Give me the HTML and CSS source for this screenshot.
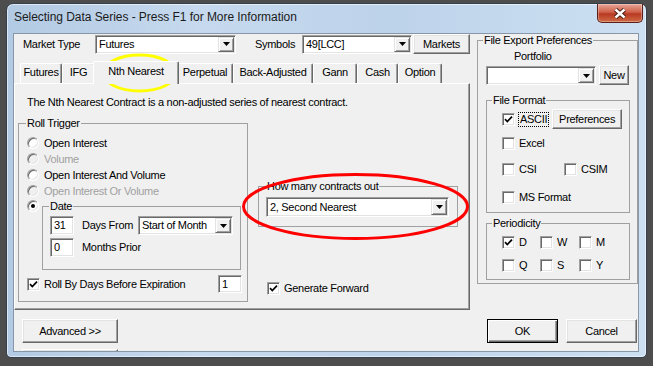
FILE: index.html
```html
<!DOCTYPE html>
<html lang="en">
<head>
  <meta charset="UTF-8">
  <title>Selecting Data Series</title>
  <link rel="stylesheet" href="styles.css">
</head>
<body>
  <div class="window">
    <div class="titlebar">
      <span class="title">Selecting Data Series - Press F1 for More Information</span>
      <span class="close">
        <svg width="14" height="11" viewBox="0 0 14 11"><path d="M2.5 1.5L11.5 9.5M11.5 1.5L2.5 9.5" stroke="#4a1a12" stroke-width="4.4"/><path d="M2.5 1.5L11.5 9.5M11.5 1.5L2.5 9.5" stroke="#fff" stroke-width="2.4"/></svg>
      </span>
    </div>

    <div class="client">
      <div class="left">
        <div class="toprow">
          <span class="lbl lbl-market">Market Type</span>
          <div class="combo combo-market">
            <span class="combo-text">Futures</span>
            <span class="combo-btn"><svg width="7" height="4" viewBox="0 0 7 4"><path d="M0 0h7L3.5 4z"/></svg></span>
          </div>
          <span class="lbl lbl-sym">Symbols</span>
          <div class="combo combo-sym">
            <span class="combo-text">49[LCC]</span>
            <span class="combo-btn"><svg width="7" height="4" viewBox="0 0 7 4"><path d="M0 0h7L3.5 4z"/></svg></span>
          </div>
          <button class="btn btn-markets">Markets</button>
        </div>

        <div class="tabs">
          <span class="tab tab-futures">Futures</span>
          <span class="tab tab-ifg">IFG</span>
          <span class="tab tab-nth active">Nth Nearest</span>
          <span class="tab tab-perp">Perpetual</span>
          <span class="tab tab-back">Back-Adjusted</span>
          <span class="tab tab-gann">Gann</span>
          <span class="tab tab-cash">Cash</span>
          <span class="tab tab-option">Option</span>
        </div>

        <div class="panel">
          <p class="desc">The Nth Nearest Contract is a non-adjusted series of nearest contract.</p>
          <div class="panel-body">
            <fieldset class="group roll">
              <legend>Roll Trigger</legend>
              <div class="group-body">
                <div class="opt"><span class="radio"></span>Open Interest</div>
                <div class="opt disabled"><span class="radio"></span>Volume</div>
                <div class="opt"><span class="radio"></span>Open Interest And Volume</div>
                <div class="opt disabled"><span class="radio"></span>Open Interest Or Volume</div>
                <div class="date-row">
                  <span class="radio checked"></span>
                  <fieldset class="group date">
                    <legend>Date</legend>
                    <div class="group-body">
                      <div class="date-line">
                        <span class="field field-num">31</span>
                        <span class="date-lbl">Days From</span>
                        <div class="combo combo-start">
                          <span class="combo-text">Start of Month</span>
                          <span class="combo-btn"><svg width="7" height="4" viewBox="0 0 7 4"><path d="M0 0h7L3.5 4z"/></svg></span>
                        </div>
                      </div>
                      <div class="date-line">
                        <span class="field field-num">0</span>
                        <span class="date-lbl">Months Prior</span>
                      </div>
                    </div>
                  </fieldset>
                </div>
                <div class="check-row expiry">
                  <span class="cb"><svg width="9" height="9" viewBox="0 0 9 9"><path d="M1 4.2l2.3 2.3L8 1.6" fill="none" stroke="#000" stroke-width="1.7"/></svg></span>
                  <span>Roll By Days Before Expiration</span>
                  <span class="field field-days">1</span>
                </div>
              </div>
            </fieldset>

            <div class="mid">
              <fieldset class="group howmany">
                <legend>How many contracts out</legend>
                <div class="group-body">
                  <div class="combo combo-nth">
                    <span class="combo-text">2, Second Nearest</span>
                    <span class="combo-btn"><svg width="7" height="4" viewBox="0 0 7 4"><path d="M0 0h7L3.5 4z"/></svg></span>
                  </div>
                </div>
              </fieldset>
              <div class="check-row forward">
                <span class="cb"><svg width="9" height="9" viewBox="0 0 9 9"><path d="M1 4.2l2.3 2.3L8 1.6" fill="none" stroke="#000" stroke-width="1.7"/></svg></span>
                <span>Generate Forward</span>
              </div>
            </div>
          </div>
        </div>
      </div>

      <div class="right">
        <fieldset class="group export">
          <legend>File Export Preferences</legend>
          <div class="group-body">
            <div class="portfolio-lbl">Portfolio</div>
            <div class="portfolio-row">
              <div class="combo combo-portfolio">
                <span class="combo-text"></span>
                <span class="combo-btn"><svg width="7" height="4" viewBox="0 0 7 4"><path d="M0 0h7L3.5 4z"/></svg></span>
              </div>
              <button class="btn btn-new">New</button>
            </div>

            <fieldset class="group format">
              <legend>File Format</legend>
              <div class="group-body">
                <div class="check-row ascii-row">
                  <span class="cb"><svg width="9" height="9" viewBox="0 0 9 9"><path d="M1 4.2l2.3 2.3L8 1.6" fill="none" stroke="#000" stroke-width="1.7"/></svg></span>
                  <span class="focus">ASCII</span>
                  <button class="btn btn-prefs">Preferences</button>
                </div>
                <div class="check-row excel-row"><span class="cb"></span>Excel</div>
                <div class="check-row csi-row">
                  <span class="item item-csi"><span class="cb"></span>CSI</span>
                  <span class="item"><span class="cb"></span>CSIM</span>
                </div>
                <div class="check-row ms-row"><span class="cb"></span>MS Format</div>
              </div>
            </fieldset>

            <fieldset class="group period">
              <legend>Periodicity</legend>
              <div class="group-body period-grid">
                <span class="item"><span class="cb"><svg width="9" height="9" viewBox="0 0 9 9"><path d="M1 4.2l2.3 2.3L8 1.6" fill="none" stroke="#000" stroke-width="1.7"/></svg></span>D</span>
                <span class="item"><span class="cb"></span>W</span>
                <span class="item"><span class="cb"></span>M</span>
                <span class="item"><span class="cb"></span>Q</span>
                <span class="item"><span class="cb"></span>S</span>
                <span class="item"><span class="cb"></span>Y</span>
              </div>
            </fieldset>
          </div>
        </fieldset>
      </div>

      <div class="footer">
        <div class="footer-stack">
          <button class="btn btn-advanced">Advanced &gt;&gt;</button>
          <button class="btn btn-advanced" aria-hidden="true"></button>
        </div>
        <button class="btn btn-dialog btn-ok">OK</button>
        <button class="btn btn-dialog">Cancel</button>
      </div>
    </div>
  </div>

  <svg class="marks" width="653" height="366" viewBox="0 0 653 366">
    <ellipse cx="139.5" cy="73" rx="36.5" ry="18" fill="none" stroke="#ffff00" stroke-width="2.8"/>
    <ellipse cx="355.5" cy="206.5" rx="112" ry="32" fill="none" stroke="#ff0000" stroke-width="3"/>
  </svg>
</body>
</html>
```

FILE: styles.css
```css
* {
  box-sizing: border-box;
}

body {
  margin: 0;
  width: 653px;
  height: 366px;
  overflow: hidden;
  position: relative;
  background: #4d4d4d;
  font-family: "Liberation Sans", Arial, sans-serif;
  font-size: 11px;
  line-height: 13px;
  letter-spacing: -0.3px;
  color: #000;
}

/* window frame */
.window {
  margin: 3px 0 0 6px;
  width: 641px;
  height: 355px;
  padding: 0 7px 0 6px;
  border: 1px solid #34404c;
  border-radius: 7px 7px 5px 5px;
  background: linear-gradient(to right, #b2cae3, #c6d9ee 30%, #bdd3ea 60%, #cde0f2);
  box-shadow: inset 0 0 0 1px rgba(255, 255, 255, 0.55);
}

.titlebar {
  display: flex;
  height: 29px;
}

.title {
  padding-left: 1px;
  line-height: 27px;
  font-size: 12px;
  letter-spacing: -0.05px;
  color: #1b1b1b;
}

.close {
  margin-left: auto;
  margin-right: -4px;
  width: 46px;
  height: 19px;
  display: flex;
  align-items: center;
  justify-content: center;
  border: 1px solid #5b2018;
  border-top: none;
  border-radius: 0 0 5px 5px;
  background: linear-gradient(#e6a898, #d06049 45%, #b83a22 55%, #cf6a45);
  box-shadow: inset 0 0 0 1px rgba(255, 255, 255, 0.3);
}

.client {
  width: 626px;
  height: 319px;
  border: 1px solid #8796a8;
  background: #f0f0f0;
  display: grid;
  grid-template-columns: 456px 168px;
  grid-template-rows: 276px auto;
  overflow: hidden;
}

/* common controls */
.btn {
  font: inherit;
  letter-spacing: inherit;
  color: #000;
  padding: 0;
  height: 20px;
  background: #f0f0f0;
  border: 1px solid;
  border-color: #fff #696969 #696969 #fff;
  box-shadow: inset -1px -1px #a0a0a0, inset 1px 1px #e3e3e3;
}

.field,
.combo {
  height: 19px;
  background: #fff;
  border: 1px solid;
  border-color: #a0a0a0 #fff #fff #a0a0a0;
  box-shadow: inset 1px 1px #696969, inset -1px -1px #e3e3e3;
}

.field {
  display: flex;
  align-items: center;
  padding-left: 3px;
}

.combo {
  display: flex;
  padding: 1px;
}

.combo-text {
  flex: 1;
  padding-left: 2px;
  align-self: center;
  white-space: nowrap;
}

.combo-btn {
  width: 16px;
  display: flex;
  align-items: center;
  justify-content: center;
  background: #f0f0f0;
  border: 1px solid;
  border-color: #e3e3e3 #696969 #696969 #e3e3e3;
  box-shadow: inset 1px 1px #fff, inset -1px -1px #a0a0a0;
}

.cb {
  flex: none;
  width: 13px;
  height: 13px;
  display: inline-flex;
  align-items: center;
  justify-content: center;
  background: #fff;
  border: 1px solid;
  border-color: #a0a0a0 #fff #fff #a0a0a0;
  box-shadow: inset 1px 1px #696969, inset -1px -1px #e3e3e3;
}

.radio {
  flex: none;
  position: relative;
  width: 12px;
  height: 12px;
  border-radius: 50%;
  background: #fff;
  border: 1px solid;
  border-color: #a0a0a0 #fff #fff #a0a0a0;
  box-shadow: inset 1px 1px #696969, inset -1px -1px #e3e3e3;
}

.radio.checked::after {
  content: "";
  position: absolute;
  left: 3px;
  top: 3px;
  width: 4px;
  height: 4px;
  border-radius: 50%;
  background: #000;
}

/* group boxes: the legend sits on the top line, the body carries the indent */
.group {
  margin: 0;
  padding: 0;
  min-width: 0;
  border: 1px solid #a0a0a0;
}

.group legend {
  padding: 0 1px;
  margin-left: 5px;
  line-height: 12px;
}

.check-row {
  display: flex;
  align-items: center;
  gap: 4px;
}

/* top row */
.toprow {
  display: flex;
  align-items: center;
  height: 20px;
  padding-left: 9px;
}

.lbl-market {
  width: 72px;
}

.combo-market {
  width: 141px;
}

.lbl-sym {
  margin-left: 19px;
  width: 47px;
}

.combo-sym {
  width: 110px;
}

.btn-markets {
  margin-left: 1px;
  width: 57px;
}

/* tabs */
.tabs {
  display: flex;
  align-items: flex-end;
  height: 22px;
  margin-top: 7px;
  padding-left: 6px;
}

.tab {
  height: 20px;
  text-align: center;
  line-height: 17px;
  border: 1px solid;
  border-bottom: none;
  border-color: #fff #696969 transparent #fff;
  border-radius: 2px 2px 0 0;
  box-shadow: inset -1px 0 #a0a0a0;
}

.tab.active {
  position: relative;
  z-index: 2;
  height: 23px;
  margin: 0 -2px -1px;
  background: #f0f0f0;
  line-height: 19px;
}

.tab-futures { width: 42px; }
.tab-ifg { width: 33px; }
.tab-nth { width: 86px; }
.tab-perp { width: 56px; }
.tab-back { width: 80px; }
.tab-gann { width: 44px; }
.tab-cash { width: 41px; }
.tab-option { width: 44px; }

.panel {
  height: 227px;
  border: 1px solid;
  border-color: #fff #696969 #696969 #fff;
  box-shadow: inset -1px -1px #a0a0a0;
}

.desc {
  margin: 12px 0 0 12px;
}

.panel-body {
  display: flex;
  gap: 10px;
  margin: 8px 0 0 3px;
}

/* roll trigger */
.roll {
  width: 230px;
  height: 185px;
}

.roll legend {
  margin-left: 7px;
}

.roll > .group-body {
  padding: 6px 5px 0 8px;
}

.opt {
  display: flex;
  align-items: center;
  gap: 5px;
  height: 16px;
}

.opt.disabled {
  color: #a0a0a0;
}

.opt.disabled .radio {
  background: #f0f0f0;
}

.date-row {
  display: flex;
  align-items: flex-start;
  gap: 3px;
  margin-top: 1px;
}

.date {
  width: 199px;
  height: 70px;
}

.date legend {
  margin-left: 6px;
}

.date > .group-body {
  padding: 4px 0 0 7px;
}

.date-line {
  display: flex;
  align-items: flex-start;
  margin-bottom: 3px;
}

.field-num {
  width: 24px;
}

.date-lbl {
  width: 56px;
  margin: 3px 0 0 8px;
  white-space: nowrap;
}

.combo-start {
  width: 95px;
}

.expiry {
  margin-top: 5px;
  height: 18px;
}

.field-days {
  margin-left: auto;
  width: 24px;
  height: 18px;
}

/* how many contracts */
.mid {
  width: 200px;
  margin-top: 63px;
}

.howmany {
  height: 47px;
}

.howmany legend {
  margin-left: 7px;
}

.howmany > .group-body {
  padding: 5px 0 0 7px;
}

.combo-nth {
  width: 183px;
  height: 20px;
}

.forward {
  margin: 55px 0 0 9px;
}

/* export preferences */
.right {
  padding-left: 7px;
}

.export {
  width: 161px;
  height: 250px;
}

.export > .group-body {
  padding: 4px 7px 0 8px;
}

.portfolio-lbl {
  margin-left: 28px;
}

.portfolio-row {
  display: flex;
  margin-top: 2px;
}

.combo-portfolio {
  width: 110px;
  margin-top: 1px;
}

.btn-new {
  margin-left: 3px;
  width: 30px;
}

.format {
  margin-top: 9px;
  width: 144px;
  height: 119px;
}

.format > .group-body {
  padding: 3px 7px 0 15px;
}

.ascii-row {
  height: 20px;
}

.focus {
  padding: 0 1px;
  outline: 1px dotted #000;
  outline-offset: 0;
}

.btn-prefs {
  margin-left: auto;
  width: 73px;
}

.excel-row {
  margin-top: 8px;
}

.csi-row {
  margin-top: 13px;
}

.ms-row {
  margin-top: 15px;
}

.item {
  display: flex;
  align-items: center;
  gap: 4px;
}

.item-csi {
  width: 58px;
}

.period {
  margin-top: 4px;
  width: 144px;
  height: 63px;
}

.period-grid {
  display: grid;
  grid-template-columns: 38px 39px 40px;
  row-gap: 10px;
  padding: 7px 0 0 15px;
}

/* footer */
.footer {
  grid-column: 1 / 3;
  display: flex;
  align-items: flex-start;
  padding: 9px 1px 0 8px;
}

.footer-stack {
  display: flex;
  flex-direction: column;
  gap: 6px;
}

.btn-advanced {
  width: 96px;
  height: 24px;
  flex: none;
}

.btn-dialog {
  width: 71px;
  height: 24px;
  margin-left: 8px;
}

.btn-ok {
  margin-left: auto;
  border-color: #000;
  box-shadow: inset 1px 1px #fff, inset -1px -1px #696969, inset -2px -2px #a0a0a0;
}

.marks {
  position: absolute;
  left: 0;
  top: 0;
  pointer-events: none;
}
```
